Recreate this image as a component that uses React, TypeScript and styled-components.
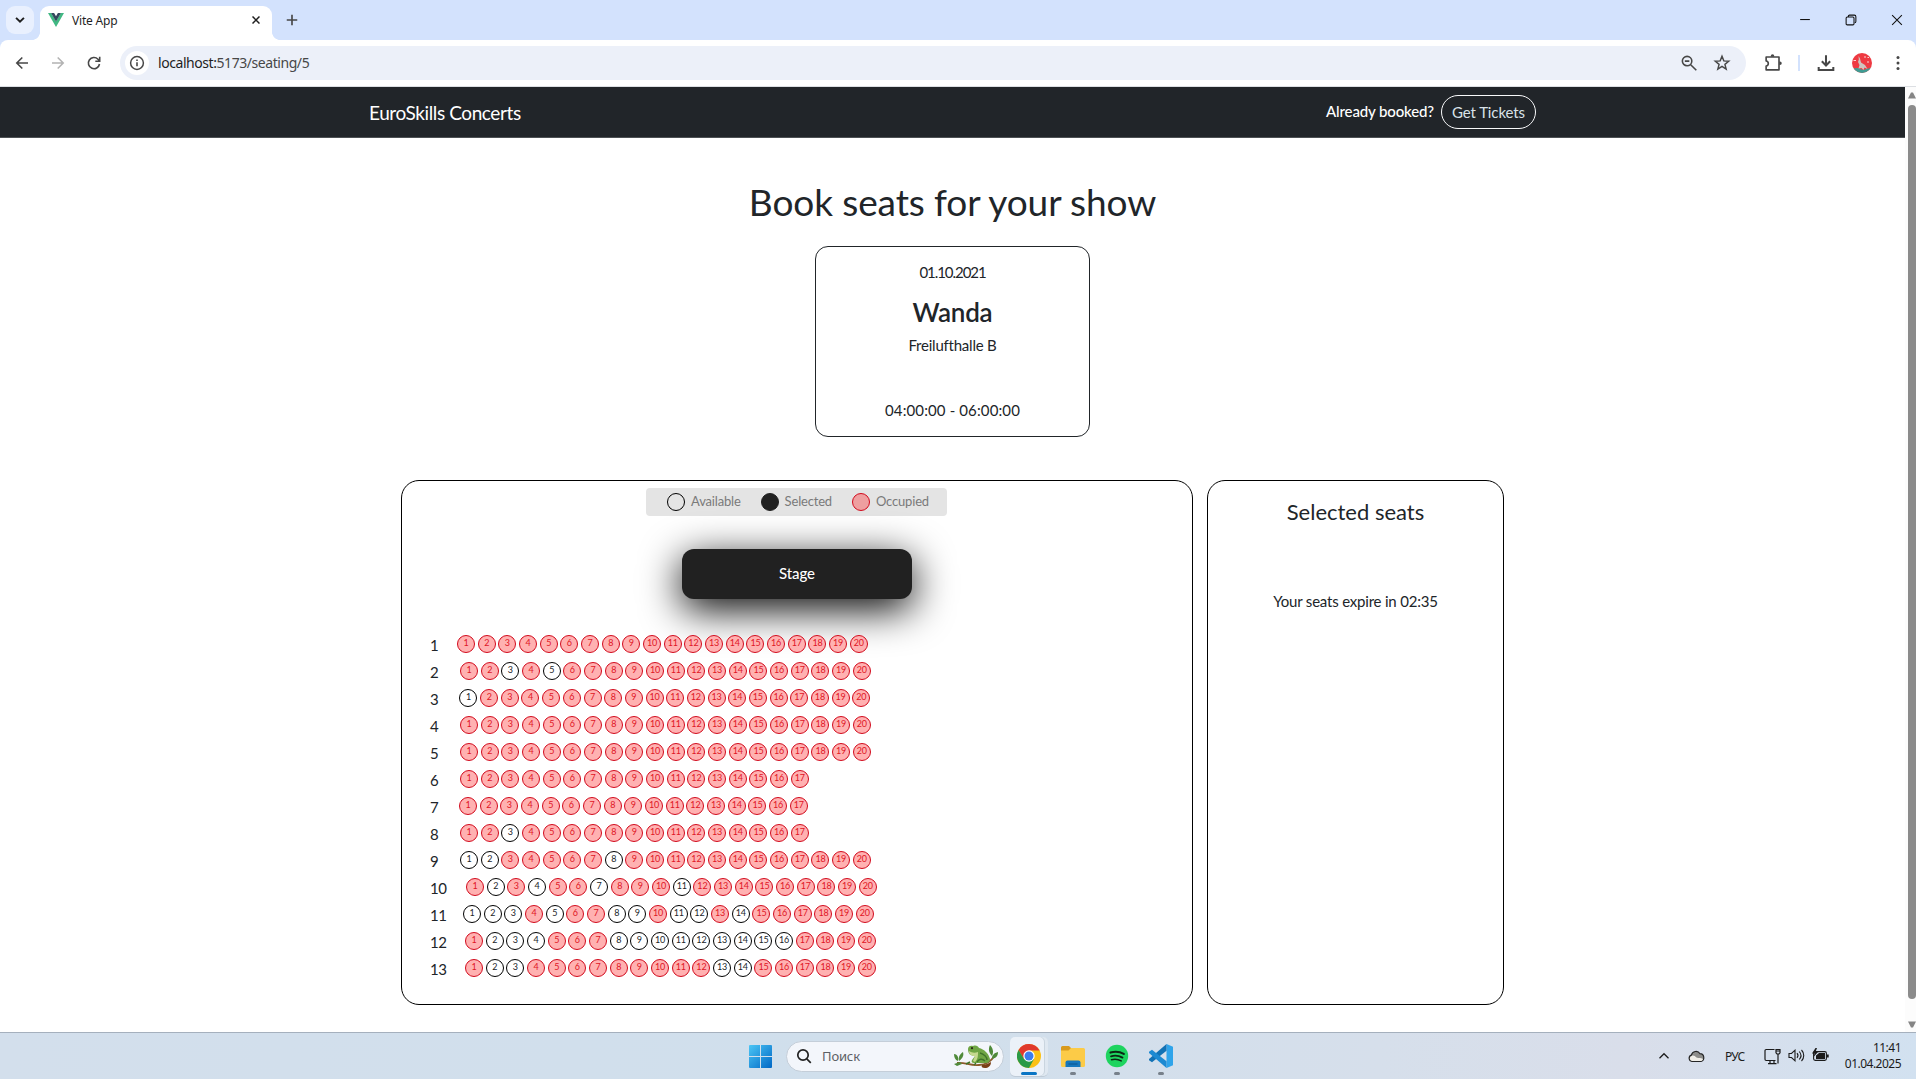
import React from "react";
import styled, { createGlobalStyle } from "styled-components";

const ui = '"Noto Sans", "Open Sans", sans-serif';
const brand = 'Lato, "Open Sans", sans-serif';

const GlobalStyle = createGlobalStyle`
  * { box-sizing: border-box; }
  body { margin: 0; background: #fff; overflow: hidden; }
  svg { display: block; flex: none; }
`;

const Screen = styled.div`
  width: 1916px;
  height: 1079px;
  display: flex;
  flex-direction: column;
  overflow: hidden;
`;

/* ---------- browser chrome ---------- */

const TabStrip = styled.div`
  height: 40px;
  flex: none;
  display: flex;
  align-items: flex-end;
  background: #d3e2fd;
  padding-left: 6px;
`;

const TabSearch = styled.div`
  width: 28px;
  height: 28px;
  margin-bottom: 6px;
  border-radius: 9px;
  background: #e9f0fe;
  display: flex;
  align-items: center;
  justify-content: center;
`;

const Flare = styled.div<{ $side: "left" | "right" }>`
  width: 8px;
  height: 8px;
  margin-left: ${(p) => (p.$side === "left" ? "-2px" : "0")};
  background: radial-gradient(
    circle at ${(p) => (p.$side === "left" ? "0 0" : "100% 0")},
    transparent 7.6px,
    #fff 8.2px
  );
`;

const Tab = styled.div`
  width: 232px;
  height: 34px;
  border-radius: 9px 9px 0 0;
  background: #fff;
  display: flex;
  align-items: center;
  padding: 0 12px 6px 8px;
`;

const TabTitle = styled.span`
  flex: 1;
  margin-left: 8px;
  font: 12px/16px ${ui};
  letter-spacing: -0.2px;
  color: #1f1f1f;
  padding-top: 2px;
`;

const NewTab = styled.div`
  margin: 0 0 13px 5px;
`;

const WindowButtons = styled.div`
  height: 40px;
  margin-left: auto;
  padding-right: 13px;
  display: flex;
  align-items: center;
  gap: 34px;
`;

const ToolbarBack = styled.div`
  background: #d3e2fd;
  flex: none;
`;

const Toolbar = styled.div`
  height: 47px;
  background: #fff;
  border-bottom: 1px solid #dcdfe3;
  border-radius: 8px 8px 0 0;
  display: flex;
  align-items: center;
  padding: 0 11px 1px 14px;
`;

const NavIcons = styled.div`
  display: flex;
  flex: none;
  gap: 20px;
  width: 106px;
`;

const AddressBar = styled.div`
  width: 1626px;
  height: 34px;
  flex: none;
  border-radius: 17px;
  background: #ecf0f9;
  display: flex;
  align-items: center;
  padding: 0 15px 0 5px;
`;

const SiteInfo = styled.div`
  width: 24px;
  height: 24px;
  border-radius: 50%;
  background: #fff;
  display: flex;
  align-items: center;
  justify-content: center;
`;

const Url = styled.span`
  flex: 1;
  margin-left: 9px;
  font: 14px/20px ${ui};
  letter-spacing: -0.44px;
  color: #474747;
  b {
    font-weight: 400;
    color: #1f1f1f;
  }
`;

const AddressActions = styled.div`
  display: flex;
  gap: 15px;
`;

const ToolActions = styled.div`
  flex: 1;
  display: flex;
  align-items: center;
  padding-left: 17px;
`;

const Divider = styled.div`
  width: 2px;
  height: 16px;
  background: #d3e2fd;
  margin: 0 17px 0 15px;
`;

const Avatar = styled.div`
  margin: 0 24px 0 17px;
`;

/* ---------- page ---------- */

const Viewport = styled.div`
  flex: 1;
  min-height: 0;
  display: flex;
`;

const Page = styled.div`
  width: 1905px;
  font-family: ${brand};
  font-variant-ligatures: none;
  color: #212529;
`;

const ScrollTrack = styled.div`
  width: 11px;
  background: #fcfcfc;
  display: flex;
  flex-direction: column;
  align-items: center;
  padding: 5px 0 4px 3px;
`;

const ScrollThumb = styled.div`
  width: 8px;
  height: 894px;
  margin: 6px 0 auto;
  border-radius: 4px;
  background: #8b8b8b;
`;

const Navbar = styled.header`
  height: 51px;
  background: #212529;
  border-bottom: 1px solid #4d5154;
  display: flex;
  align-items: center;
  justify-content: space-between;
  padding: 0 369px;
`;

const Text = styled.span<{ $size: number; $line: number; $spacing?: number; $weight?: number }>`
  font-size: ${(p) => p.$size}px;
  line-height: ${(p) => p.$line}px;
  letter-spacing: ${(p) => p.$spacing ?? 0}px;
  font-weight: ${(p) => p.$weight ?? 400};
  white-space: nowrap;
`;

const Brand = styled(Text)`
  color: #fff;
  padding-top: 1px;
`;

const Booked = styled.div`
  display: flex;
  align-items: center;
  gap: 7px;
  color: #fff;
`;

const TicketsButton = styled.button`
  width: 95px;
  height: 34px;
  padding: 0 0 1px;
  border: 1px solid #f8f9fa;
  border-radius: 17px;
  background: transparent;
  color: #d9e2e8;
  font: 15px/20px ${brand};
  letter-spacing: -0.1px;
  font-variant-ligatures: none;
`;

const BookedLabel = styled(Text)`
  padding-bottom: 2px;
`;

const Main = styled.main`
  display: flex;
  flex-direction: column;
  align-items: center;
  padding-top: 42px;
`;

const Title = styled.h1`
  margin: 0;
  font-size: 37px;
  line-height: 44px;
  font-weight: 400;
  letter-spacing: -0.1px;
`;

const ShowCard = styled.section`
  width: 275px;
  height: 191px;
  margin-top: 22px;
  border: 1px solid #212529;
  border-radius: 13px;
  display: flex;
  flex-direction: column;
  align-items: center;
  padding: 14px 0 15px;
`;

const Artist = styled.h2`
  margin: 13px 0 6px;
  font-size: 26px;
  line-height: 32px;
  font-weight: 600;
  letter-spacing: -0.2px;
`;

const ShowTime = styled(Text)`
  margin-top: auto;
`;

const Panels = styled.div`
  display: flex;
  gap: 14px;
  margin-top: 43px;
`;

const Panel = styled.section<{ $width: number; $top: number }>`
  width: ${(p) => p.$width}px;
  height: 525px;
  border: 1px solid #000;
  border-radius: 18px;
  padding-top: ${(p) => p.$top}px;
  display: flex;
  flex-direction: column;
  align-items: center;
`;

const Legend = styled.div`
  width: 301px;
  height: 28px;
  margin-right: 2px;
  padding-left: 4px;
  border-radius: 4px;
  background: #e4e4e4;
  display: flex;
  align-items: center;
  justify-content: center;
  gap: 20px;
  color: #7a7a7a;
`;

const LegendItem = styled.div`
  display: flex;
  align-items: center;
  gap: 6px;
`;

const LegendLabel = styled(Text)`
  padding-bottom: 2px;
`;

type SeatKind = "free" | "taken" | "picked";

const seatColors: Record<SeatKind, [string, string, string]> = {
  free: ["#000", "transparent", "#212529"],
  taken: ["#d20a1c", "#ffb1b1", "#e01525"],
  picked: ["#212121", "#212121", "#fff"],
};

const Circle = styled.div<{ $kind: SeatKind; $muted?: boolean }>`
  width: 18px;
  height: 18px;
  flex: none;
  border-radius: 50%;
  border: 1px solid ${(p) => seatColors[p.$kind][0]};
  background: ${(p) => (p.$muted && p.$kind === "taken" ? "#ee9fa0" : seatColors[p.$kind][1])};
  color: ${(p) => seatColors[p.$kind][2]};
  font-size: 9px;
  line-height: 14px;
  letter-spacing: -0.2px;
  text-align: center;
`;

const Stage = styled.div`
  width: 230px;
  height: 50px;
  margin-top: 33px;
  padding-bottom: 2px;
  border-radius: 12px;
  background: #212121;
  box-shadow: 0 10px 40px #000;
  color: #fff;
  display: flex;
  align-items: center;
  justify-content: center;
`;

const Rows = styled.div`
  align-self: stretch;
  margin-top: 36px;
  padding-left: 28px;
  display: flex;
  flex-direction: column;
  gap: 9px;
`;

const SeatRow = styled.div`
  height: 18px;
  display: flex;
`;

const RowLabel = styled.span<{ $width: number }>`
  width: ${(p) => p.$width + 1}px;
  font-size: 15px;
  line-height: 20px;
  letter-spacing: -0.5px;
`;

const Seats = styled.div`
  display: flex;
  gap: 2.68px;
`;

const Expiry = styled(Text)`
  margin-top: 64px;
`;

/* ---------- taskbar ---------- */

const Taskbar = styled.footer`
  height: 47px;
  flex: none;
  border-top: 1px solid #a5b0bd;
  background: linear-gradient(90deg, #d3dfec 0%, #d0dfec 45%, #d6dfeb 72%, #d9deea 85%, #d2e1f0 100%);
  display: flex;
  align-items: center;
  padding: 0 15px 0 749px;
  font-family: ${ui};
  color: #1b1b1b;
`;

const SearchBox = styled.div`
  width: 218px;
  height: 31px;
  margin-left: 14px;
  border: 1px solid #c4ced9;
  border-radius: 16px;
  background: #f3f6fb;
  display: flex;
  align-items: center;
  padding: 0 3px 0 9px;
`;

const SearchLabel = styled.span`
  flex: 1;
  margin-left: 10px;
  font-size: 13px;
  letter-spacing: -0.15px;
  color: #5c6065;
`;

const Apps = styled.div`
  display: flex;
  margin-left: 6px;
  gap: 6px;
`;

const AppSlot = styled.div<{ $active?: boolean }>`
  width: 38px;
  height: 39px;
  border-radius: 5px;
  display: flex;
  flex-direction: column;
  align-items: center;
  justify-content: space-between;
  padding: ${(p) => (p.$active ? "7px 3px 1px 3px" : "7px 0 1px")};
  background: ${(p) => (p.$active ? "#ebf1f8" : "transparent")};
  box-shadow: ${(p) => (p.$active ? "inset -3px 0 0 #dfe8f1, inset -4px 0 0 #cad5df, 0 1px 0 #bfcbd7" : "none")};
`;

const Indicator = styled.div<{ $active?: boolean }>`
  width: ${(p) => (p.$active ? 16 : 6)}px;
  height: 3px;
  border-radius: 2px;
  background: ${(p) => (p.$active ? "#0a75c4" : "#77808a")};
`;

const Tray = styled.div`
  margin-left: auto;
  display: flex;
  align-items: center;
  gap: 18px;
`;

const Language = styled.span`
  width: 39px;
  margin-left: 2px;
  margin-right: -18px;
  font-size: 12px;
  letter-spacing: -0.7px;
`;

const StatusIcons = styled.div`
  display: flex;
  gap: 7px;
  margin-right: -18px;
`;

const Clock = styled.div`
  width: 72px;
  text-align: right;
  font-size: 12px;
  line-height: 16px;
  letter-spacing: -0.52px;
`;

/* ---------- icons ---------- */

const Glyph = ({ size = 16, color = "#474747", width = 1.6, children }: any) => (
  <svg width={size} height={size} viewBox="0 0 16 16" fill="none" stroke={color} strokeWidth={width}>
    {children}
  </svg>
);

const VueLogo = () => (
  <svg width="16" height="14" viewBox="0 0 16 14">
    <path d="M0 0h3.2L8 8.3 12.8 0H16L8 13.9z" fill="#41b883" />
    <path d="M3.1 0h3L8 3.3 9.9 0h3L8 8.5z" fill="#34495e" />
  </svg>
);

const AvatarPicture = () => (
  <svg width="20" height="20" viewBox="0 0 20 20">
    <clipPath id="avatarClip"><circle cx="10" cy="10" r="10" /></clipPath>
    <g clipPath="url(#avatarClip)">
      <rect width="20" height="20" fill="#ee3a42" />
      <path d="M0 15.500l6-.5 5 2 9-2.500v6H0z" fill="#3f9c93" />
      <path d="M6.500 3l1.500 2.500 1 4 4 2.500 2.500 4-3-1.500-1 2.500-2-2-3 .5 1-3.500-1.500-3 .800-2.500z" fill="#cfc5bf" />
      <path d="M12 4h2M15.500 4.500h1.500M1.500 7.500h2.500M15 9h2" stroke="#f9d4d4" strokeWidth="1.200" />
    </g>
  </svg>
);

const WindowsLogo = () => (
  <svg width="23" height="23" viewBox="0 0 23 23">
    <defs>
      <linearGradient id="win" x1="0" y1="0" x2="1" y2="1">
        <stop offset="0" stopColor="#4cc6f5" />
        <stop offset="1" stopColor="#0067c5" />
      </linearGradient>
    </defs>
    <path
      fill="url(#win)"
      d="M1 0h10v11H0V1a1 1 0 0 1 1-1zM12 0h10a1 1 0 0 1 1 1v10H12zM0 12h11v11H1a1 1 0 0 1-1-1zM12 12h11v10a1 1 0 0 1-1 1H12z"
    />
  </svg>
);

const Frog = () => (
  <svg width="47" height="25" viewBox="0 0 47 25">
    <path d="M4 19c8-1 13 3 22 2 8 0 13-5 16-10" stroke="#8a5a2b" strokeWidth="1.8" fill="none" />
    <path d="M29 21c3 0 7-2 9-3 0 4-3 6-6 6s-4-1-3-3z" fill="#7a3f16" />
    <path d="M1 10c3 0 5 3 4 7-3-1-4-4-4-7zM10 8c1 3 0 6-4 9-1-4 1-7 4-9zM1 20l6-2 2 2-5 2zM37 1c3 3 4 7 2 11-3-3-4-7-2-11zM45 8c0 4-2 6-6 7 0-4 2-6 6-7z" fill="#4f8a3a" />
    <path d="M15 5c0-3 3-4 5-3 3-1 5 0 6 2 5 1 10 6 11 11 0 2-1 4-4 4H21c-2 0-3-1-2-3l3-4c-4 0-7-2-7-7z" fill="#6fa544" />
    <path d="M16 7c3 2 6 2 9 1 0 4 0 7-3 10l-2-1 2-5c-4 0-6-2-6-5z" fill="#c5d98f" />
    <path d="M27 9c4 1 7 4 7 7M24 18c2-3 5-4 8-1M17 18l-4 2M23 19l-2 2" stroke="#3f7429" strokeWidth="1.4" fill="none" />
    <circle cx="19" cy="4.2" r="1.1" fill="#2d2a16" />
  </svg>
);

const ChromeLogo = () => (
  <svg width="24" height="24" viewBox="0 0 24 24">
    <circle cx="12" cy="12" r="12" fill="#fbc116" />
    <path d="M12 6.400h10.600A12 12 0 0 0 1.600 6l5.200 9z" fill="#e0392c" />
    <path d="M1.600 6A12 12 0 0 0 12 24l5-9H7z" fill="#2a9a47" />
    <circle cx="12" cy="12" r="5.700" fill="#fff" />
    <circle cx="12" cy="12" r="4.500" fill="#3b7ded" />
  </svg>
);

const FolderIcon = () => (
  <svg width="24" height="24" viewBox="0 0 24 24">
    <path d="M0 3.5A1.5 1.5 0 0 1 1.5 2H8l2.5 2.5L9 7H0z" fill="#d99a1c" />
    <path d="M0 6.5h7.5L10 4h12.5A1.5 1.5 0 0 1 24 5.500V21.500A1.500 1.500 0 0 1 22.500 23h-21A1.500 1.500 0 0 1 0 21.500z" fill="#fccb47" />
    <path d="M4.500 23v-4.500A2 2 0 0 1 6.500 16.500h11a2 2 0 0 1 2 2V23z" fill="#1677bd" />
    <path d="M7.500 20h9" stroke="#0f5b99" strokeWidth="1.300" />
  </svg>
);

const SpotifyIcon = () => (
  <svg width="24" height="24" viewBox="0 0 24 24">
    <circle cx="12" cy="12" r="11.200" fill="#1ed45f" />
    <g stroke="#0c2614" fill="none" strokeLinecap="round">
      <path d="M5.500 8.600c4.500-1.300 9.500-.8 13.300 1.300" strokeWidth="2.100" />
      <path d="M6 12.300c4-1.100 8-.6 11.500 1.300" strokeWidth="1.800" />
      <path d="M6.500 15.700c3.500-.8 6.700-.5 9.700 1.200" strokeWidth="1.500" />
    </g>
  </svg>
);

const CodeIcon = () => (
  <svg width="24" height="24" viewBox="0 0 24 24">
    <path d="M17.500 0L24 2.800v18.400L17.500 24z" fill="#2fa4ea" />
    <path d="M17.500 0v6.800L3 18.300 0 16.200 0 15z" fill="#1272b5" />
    <path d="M17.500 24v-6.800L3 5.700 0 7.800V9z" fill="#1d8ad2" />
  </svg>
);

const CloudIcon = () => (
  <svg width="17" height="13" viewBox="0 0 17 13">
    <path d="M4 11.500a3.300 3.300 0 0 1-.6-6.400A4.700 4.700 0 0 1 12 3.700a4 4 0 0 1 1 7.800z" fill="#8d8d8b" stroke="#262626" strokeWidth="1.200" />
    <path d="M4 11A2.700 2.700 0 0 1 4 5.700c2-.5 3 .7 4.500 1.700 2 1 4.500 0 6.500 1.500-.4 1.400-1.200 2.100-2.500 2.100z" fill="#f0eee8" />
  </svg>
);

const MonitorIcon = () => (
  <svg width="17" height="17" viewBox="0 0 17 17" fill="none" stroke="#1b1b1b" strokeWidth="1.200">
    <path d="M10.500 1.500H2.200A1.200 1.200 0 0 0 1 2.700v8.600a1.200 1.200 0 0 0 1.200 1.200h9.300M6 12.500v3M10 12.500v3M4 15.700h8.500M14 6v9.500" />
    <path d="M12 1.500h4v3.300L15 6h-2l-1-1.200zM12 3h4" />
  </svg>
);

const SpeakerIcon = () => (
  <svg width="17" height="15" viewBox="0 0 17 15" fill="none" stroke="#1b1b1b" strokeWidth="1.100">
    <path d="M1 5.500h2.500L7 2.200v10.600L3.500 9.500H1zM9 5.200c1.200 1.400 1.200 3.200 0 4.600M11.200 3.500c2.200 2.400 2.200 5.600 0 8M13.500 2c3 3.200 3 7.800 0 11" />
  </svg>
);

const BatteryIcon = () => (
  <svg width="17" height="14" viewBox="0 0 17 14">
    <rect x="1.600" y="3.600" width="12.800" height="8.800" rx="1.600" fill="none" stroke="#1b1b1b" strokeWidth="1.100" />
    <path d="M4 11V7.500L7 5h6v6zM15 6.500h1.700v3H15zM3.500 0L0 5.500h2.500L1.500 9 6 4H3.500L5 0z" fill="#1b1b1b" />
  </svg>
);

const Arrow = ({ down }: { down?: boolean }) => (
  <svg width="8" height="7" viewBox="0 0 8 7">
    <path d={down ? "M0 .5h8L5 6.500H3z" : "M0 6.500h8L5 .5H3z"} fill="#858585" />
  </svg>
);

/* ---------- data ---------- */

const rows: { indent: number; count: number; free: number[] }[] = [
  { indent: 26, count: 20, free: [] },
  { indent: 29, count: 20, free: [3, 5] },
  { indent: 28.480, count: 20, free: [1] },
  { indent: 29, count: 20, free: [] },
  { indent: 29, count: 20, free: [] },
  { indent: 29, count: 17, free: [] },
  { indent: 28, count: 17, free: [] },
  { indent: 29, count: 17, free: [3] },
  { indent: 29, count: 20, free: [1, 2, 8] },
  { indent: 35, count: 20, free: [2, 4, 7, 11] },
  { indent: 32, count: 20, free: [1, 2, 3, 5, 8, 9, 11, 12, 14] },
  { indent: 34, count: 20, free: [2, 3, 4, 8, 9, 10, 11, 12, 13, 14, 15, 16] },
  { indent: 34, count: 20, free: [2, 3, 13, 14] },
];

const legend: [SeatKind, string][] = [
  ["free", "Available"],
  ["picked", "Selected"],
  ["taken", "Occupied"],
];

const BrowserChrome = () => (
  <>
    <TabStrip>
      <TabSearch>
        <Glyph size={14} color="#1f1f1f" width={2.200}><path d="M3.500 5.500L8 10l4.500-4.500" /></Glyph>
      </TabSearch>
      <Flare $side="left" />
      <Tab>
        <VueLogo />
        <TabTitle>Vite App</TabTitle>
        <Glyph size={8} color="#1f1f1f" width={3}><path d="M1 1l14 14M15 1L1 15" /></Glyph>
      </Tab>
      <Flare $side="right" />
      <NewTab>
        <Glyph size={14} color="#474747" width={1.900}><path d="M8 2v12M2 8h12" /></Glyph>
      </NewTab>
      <WindowButtons>
        <Glyph size={12} color="#111" width={1.400}><path d="M1.500 7.400h13" /></Glyph>
        <Glyph size={12} color="#111" width={1.400}>
          <rect x="1.500" y="4" width="10.500" height="10.500" rx="1.500" />
          <path d="M4.500 4V3A1.500 1.500 0 0 1 6 1.500h6.500a2 2 0 0 1 2 2V10a1.500 1.500 0 0 1-1.500 1.500" />
        </Glyph>
        <Glyph size={12} color="#111" width={1.400}><path d="M1.500 1.500l13 13M14.500 1.500l-13 13" /></Glyph>
      </WindowButtons>
    </TabStrip>
    <ToolbarBack>
      <Toolbar>
        <NavIcons>
          <Glyph><path d="M14 8H3M8.300 2.500L2.800 8l5.500 5.500" /></Glyph>
          <Glyph color="#b3b3b3"><path d="M2 8h11M7.700 2.500L13.200 8l-5.500 5.500" /></Glyph>
          <Glyph><path d="M13.500 9A5.600 5.600 0 1 1 12 4.200l1.500 1.500M13.700 1.800v4.400H9.300" /></Glyph>
        </NavIcons>
        <AddressBar>
          <SiteInfo>
            <Glyph width={1.500}>
              <circle cx="8" cy="8" r="6.400" />
              <path d="M8 7.200v4M8 4.600v1.500" strokeWidth="1.600" />
            </Glyph>
          </SiteInfo>
          <Url><b>localhost:</b>5173/seating/5</Url>
          <AddressActions>
            <Glyph size={18} width={1.400}>
              <circle cx="6.300" cy="6.300" r="4.200" />
              <path d="M9.500 9.500l5 5M4.300 6.300h4" />
            </Glyph>
            <Glyph size={18} width={1.300}>
              <path d="M8 2l1.600 4.100 4.400.3-3.400 2.800 1.100 4.300L8 11.100l-3.700 2.400 1.100-4.300L2 6.400l4.400-.3z" />
            </Glyph>
          </AddressActions>
        </AddressBar>
        <ToolActions>
          <Glyph size={20} width={1.300}>
            <path d="M2.500 3.200h10.300v10.300H2.500v-3c2.300-.3 2.300-3.800 0-4.100z" strokeLinejoin="round" />
            <path d="M6.200 3V2.300a1.400 1.400 0 0 1 2.800 0V3zM13 6.800h.6a1.400 1.400 0 0 1 0 2.800H13z" fill="#474747" stroke="none" />
          </Glyph>
          <Divider />
          <Glyph size={18} width={1.800}><path d="M8 1v9M4.300 6.500L8 10.200l3.700-3.700M1.500 11.500v2.700h13v-2.700" /></Glyph>
          <Avatar><AvatarPicture /></Avatar>
          <svg width="4" height="16" viewBox="0 0 4 16" fill="#474747">
            <circle cx="2" cy="2.500" r="1.500" /><circle cx="2" cy="8" r="1.500" /><circle cx="2" cy="13.500" r="1.500" />
          </svg>
        </ToolActions>
      </Toolbar>
    </ToolbarBack>
  </>
);

const SeatingPlan = () => (
  <Rows>
    {rows.map((row, r) => (
      <SeatRow key={r}>
        <RowLabel $width={row.indent}>{r + 1}</RowLabel>
        <Seats>
          {Array.from({ length: row.count }, (_, i) => i + 1).map((n) => (
            <Circle key={n} $kind={row.free.includes(n) ? "free" : "taken"}>{n}</Circle>
          ))}
        </Seats>
      </SeatRow>
    ))}
  </Rows>
);

const apps = [
  { Icon: ChromeLogo, active: true },
  { Icon: FolderIcon, active: false },
  { Icon: SpotifyIcon, active: false },
  { Icon: CodeIcon, active: false },
];

export default function App() {
  return (
    <Screen>
      <GlobalStyle />
      <BrowserChrome />
      <Viewport>
        <Page>
          <Navbar>
            <Brand $size={19} $line={24} $spacing={-0.400}>EuroSkills Concerts</Brand>
            <Booked>
              <BookedLabel $size={15} $line={20} $weight={500} $spacing={-0.130}>Already booked?</BookedLabel>
              <TicketsButton>Get Tickets</TicketsButton>
            </Booked>
          </Navbar>
          <Main>
            <Title>Book seats for your show</Title>
            <ShowCard>
              <Text $size={15} $line={22} $spacing={-1.050}>01.10.2021</Text>
              <Artist>Wanda</Artist>
              <Text $size={15} $line={22} $spacing={-0.220}>Freilufthalle B</Text>
              <ShowTime $size={15} $line={22} $spacing={0.120}>04:00:00 - 06:00:00</ShowTime>
            </ShowCard>
            <Panels>
              <Panel $width={792} $top={7}>
                <Legend>
                  {legend.map(([kind, label]) => (
                    <LegendItem key={kind}>
                      <Circle $kind={kind} $muted />
                      <LegendLabel $size={13} $line={16} $spacing={-0.180}>{label}</LegendLabel>
                    </LegendItem>
                  ))}
                </Legend>
                <Stage><Text $size={15} $line={20} $weight={500} $spacing={-0.100}>Stage</Text></Stage>
                <SeatingPlan />
              </Panel>
              <Panel $width={297} $top={17}>
                <Text $size={22} $line={28}>Selected seats</Text>
                <Expiry $size={15} $line={22} $spacing={-0.200}>Your seats expire in 02:35</Expiry>
              </Panel>
            </Panels>
          </Main>
        </Page>
        <ScrollTrack>
          <Arrow />
          <ScrollThumb />
          <Arrow down />
        </ScrollTrack>
      </Viewport>
      <Taskbar>
        <WindowsLogo />
        <SearchBox>
          <Glyph size={16} color="#222" width={1.700}><circle cx="7" cy="7" r="5.200" /><path d="M10.800 10.800l4 4" /></Glyph>
          <SearchLabel>Поиск</SearchLabel>
          <Frog />
        </SearchBox>
        <Apps>
          {apps.map(({ Icon, active }, i) => (
            <AppSlot key={i} $active={active}>
              <Icon />
              <Indicator $active={active} />
            </AppSlot>
          ))}
        </Apps>
        <Tray>
          <Glyph size={12} color="#1b1b1b" width={1.700}><path d="M2 11l6-6 6 6" /></Glyph>
          <CloudIcon />
          <Language>РУС</Language>
          <StatusIcons><MonitorIcon /><SpeakerIcon /><BatteryIcon /></StatusIcons>
          <Clock>11:41<br />01.04.2025</Clock>
        </Tray>
      </Taskbar>
    </Screen>
  );
}
